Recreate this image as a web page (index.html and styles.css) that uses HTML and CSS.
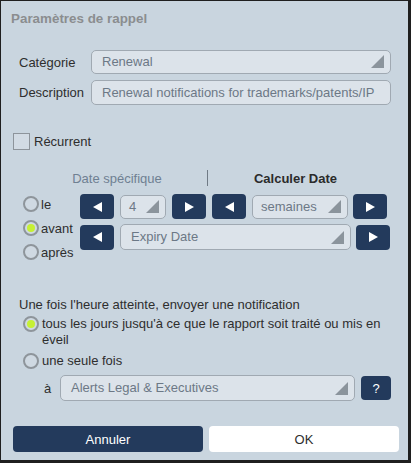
FILE: index.html
```html
<!DOCTYPE html>
<html>
<head>
    <meta charset="UTF-8">
    <title>Paramètres de rappel</title>
    <link rel="stylesheet" href="styles.css">
</head>
<body>
    <div class="dialog">
        <div class="dialog-title">Paramètres de rappel</div>

        <div class="fields">
            <label class="field-label">Catégorie</label>
            <div class="select">Renewal<span class="select-arrow"></span></div>
            <label class="field-label">Description</label>
            <div class="input">Renewal notifications for trademarks/patents/IP</div>
        </div>

        <div class="recurrent">
            <span class="checkbox"></span>
            <span>Récurrent</span>
        </div>

        <div class="date-head">
            <div class="date-tab">Date spécifique</div>
            <div class="date-sep"></div>
            <div class="date-tab active">Calculer Date</div>
        </div>

        <div class="date-body">
            <div class="radio-col">
                <div class="radio-row"><span class="radio"></span>le</div>
                <div class="radio-row"><span class="radio checked"></span>avant</div>
                <div class="radio-row"><span class="radio"></span>après</div>
            </div>
            <div class="controls">
                <div class="control-row">
                    <button class="nav-btn"><span class="arrow-left"></span></button>
                    <div class="select small">4<span class="select-arrow"></span></div>
                    <button class="nav-btn"><span class="arrow-right"></span></button>
                    <button class="nav-btn"><span class="arrow-left"></span></button>
                    <div class="select unit">semaines<span class="select-arrow"></span></div>
                    <button class="nav-btn"><span class="arrow-right"></span></button>
                </div>
                <div class="control-row">
                    <button class="nav-btn"><span class="arrow-left"></span></button>
                    <div class="select wide">Expiry Date<span class="select-arrow"></span></div>
                    <button class="nav-btn"><span class="arrow-right"></span></button>
                </div>
            </div>
        </div>

        <div class="notify">
            <div class="notify-title">Une fois l'heure atteinte, envoyer une notification</div>
            <div class="notify-option"><span class="radio checked"></span><span>tous les jours jusqu'à ce que le rapport soit traité ou mis en éveil</span></div>
            <div class="notify-option"><span class="radio"></span><span>une seule fois</span></div>
            <div class="recipient">
                <span class="recipient-label">à</span>
                <div class="select wide">Alerts Legal &amp; Executives<span class="select-arrow"></span></div>
                <button class="help-btn">?</button>
            </div>
        </div>

        <div class="actions">
            <button class="btn btn-cancel">Annuler</button>
            <button class="btn btn-ok">OK</button>
        </div>
    </div>
</body>
</html>
```

FILE: styles.css
```css
body {
    margin: 0;
    background-color: #1f1f1f;
    font-family: "Liberation Sans", Arial, sans-serif;
    font-size: 13px;
    color: #2e2e2e;
}

.dialog {
    width: 407px;
    height: 459px;
    margin: 1px 0 0 1px;
    background-color: #c9d5df;
    box-sizing: border-box;
    padding: 10px 0 0 0;
    display: flex;
    flex-direction: column;
    overflow: hidden;
}

.dialog-title {
    padding-left: 10px;
    font-weight: bold;
    font-size: 13.4px;
    color: #8b8d8f;
    line-height: 16px;
}

/* category / description */
.fields {
    display: grid;
    grid-template-columns: 66px 1fr;
    column-gap: 6px;
    row-gap: 6px;
    margin: 23px 17px 0 18px;
    align-items: center;
}

.field-label {
    white-space: nowrap;
}

.select,
.input {
    position: relative;
    height: 24px;
    box-sizing: border-box;
    background-color: #dce3ea;
    border: 1px solid #a0a9b2;
    border-radius: 5px;
    padding: 0 10px;
    line-height: 22px;
    color: #6c7886;
    white-space: nowrap;
    overflow: hidden;
}

.input {
    height: 25px;
    line-height: 23px;
}

.select-arrow {
    position: absolute;
    right: 6px;
    bottom: 5px;
    width: 0;
    height: 0;
    border-left: 13px solid transparent;
    border-bottom: 13px solid #8b949c;
}

/* recurrent */
.recurrent {
    display: flex;
    align-items: center;
    gap: 4px;
    margin: 28px 0 0 12px;
    height: 16px;
}

.checkbox {
    width: 15px;
    height: 15px;
    border: 1px solid #8d949b;
    background-color: #d2dbe4;
}

/* date tabs */
.date-head {
    display: flex;
    align-items: center;
    margin: 21px 0 0 26px;
    height: 16px;
}

.date-tab {
    width: 180px;
    text-align: center;
    color: #6f8092;
}

.date-tab.active {
    width: 175px;
    color: #2b2b2b;
    font-weight: bold;
}

.date-sep {
    width: 1px;
    height: 16px;
    background-color: #6f7a85;
}

.date-body {
    display: flex;
    margin: 8px 0 0 22px;
}

.radio-col {
    display: flex;
    flex-direction: column;
    gap: 8px;
    width: 57px;
    padding-top: 2px;
}

.radio-row {
    display: flex;
    align-items: center;
    gap: 2px;
    height: 16px;
}

.radio {
    position: relative;
    flex: none;
    width: 16px;
    height: 16px;
    box-sizing: border-box;
    border: 2px solid #8e959b;
    border-radius: 50%;
    background-color: #cfd9e2;
}

.radio.checked::after {
    content: "";
    position: absolute;
    left: 2px;
    top: 2px;
    width: 8px;
    height: 8px;
    border-radius: 50%;
    background-color: #c6f034;
}

.controls {
    display: flex;
    flex-direction: column;
    gap: 5px;
}

.control-row {
    display: flex;
    gap: 6px;
    align-items: center;
}

.nav-btn {
    width: 34px;
    height: 25px;
    border: none;
    border-radius: 4px;
    background-color: #233a5c;
    display: flex;
    align-items: center;
    justify-content: center;
    padding: 0;
}

.arrow-left {
    width: 0;
    height: 0;
    border-top: 5px solid transparent;
    border-bottom: 5px solid transparent;
    border-right: 9px solid #ffffff;
}

.arrow-right {
    width: 0;
    height: 0;
    border-top: 5px solid transparent;
    border-bottom: 5px solid transparent;
    border-left: 9px solid #ffffff;
}

.select.small {
    width: 46px;
    padding: 0 8px;
}

.select.unit {
    width: 96px;
    margin-right: -1px;
    padding: 0 8px;
}

.select.wide {
    flex: 1;
    height: 26px;
    line-height: 24px;
}

.control-row .select.wide {
    width: 231px;
    flex: none;
    margin-right: -1px;
}

/* notification */
.notify {
    margin: 37px 17px 0 18px;
}

.notify-title {
    line-height: 16px;
}

.notify-option {
    display: flex;
    align-items: flex-start;
    gap: 3px;
    margin: 3px 0 0 4px;
    line-height: 16px;
}

.notify-option + .notify-option {
    margin-top: 5px;
}

.recipient {
    display: flex;
    align-items: center;
    gap: 6px;
    margin: 6px 0 0 25px;
}

.recipient-label {
    width: 10px;
}

.help-btn {
    width: 30px;
    height: 24px;
    border: none;
    border-radius: 4px;
    background-color: #233a5c;
    color: #ffffff;
    font-family: "Liberation Sans", Arial, sans-serif;
    font-size: 13px;
    padding: 0;
}

/* buttons */
.actions {
    display: flex;
    gap: 6px;
    margin: 25px 0 0 12px;
}

.btn {
    width: 190px;
    height: 26px;
    border: none;
    border-radius: 4px;
    font-family: "Liberation Sans", Arial, sans-serif;
    font-size: 13px;
    padding: 0;
}

.btn-cancel {
    background-color: #233a5c;
    color: #ffffff;
}

.btn-ok {
    background-color: #ffffff;
    color: #2e2e2e;
}
```
